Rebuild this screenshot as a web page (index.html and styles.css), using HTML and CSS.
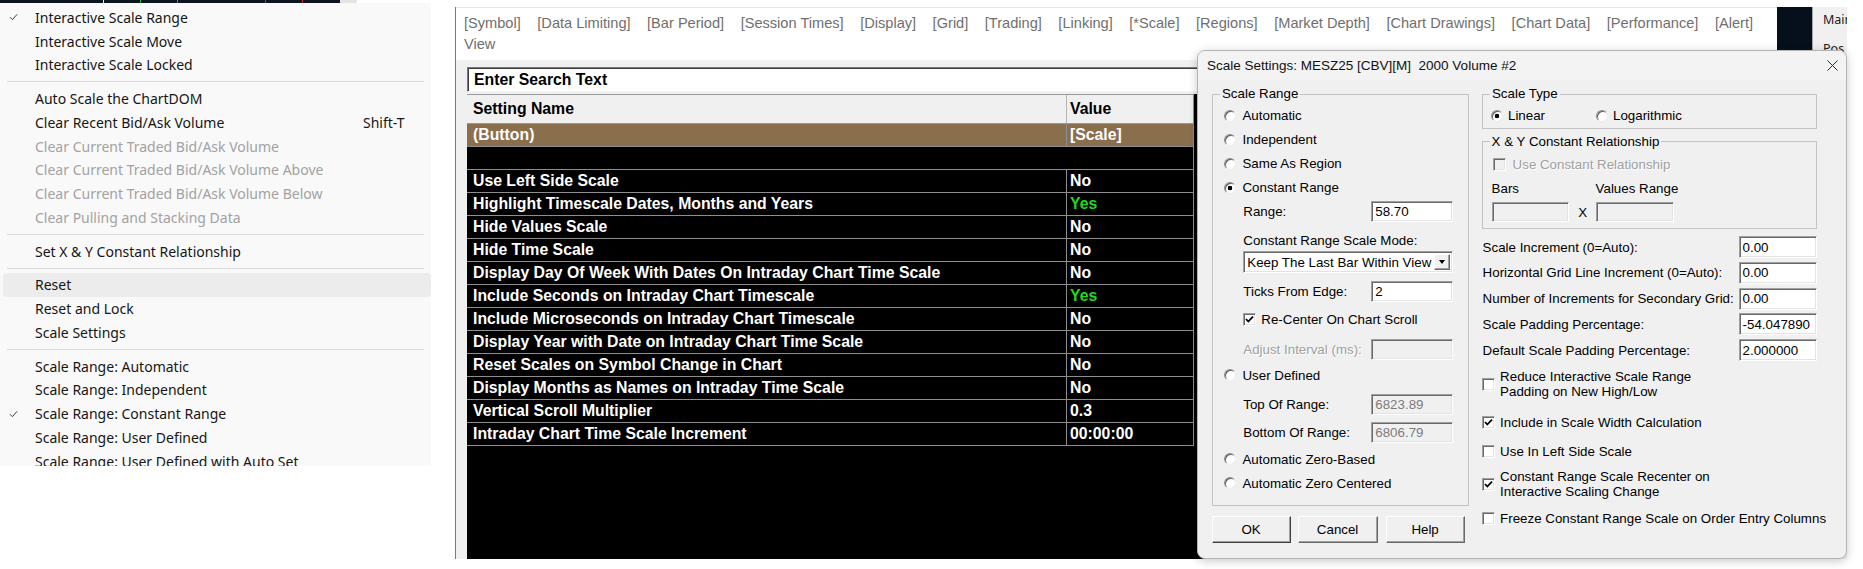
FILE: index.html
```html
<!DOCTYPE html>
<html lang="en">
<head>
<meta charset="utf-8">
<title>Scale Settings</title>
<link rel="stylesheet" href="styles.css">
</head>
<body>
<div class="screen">
  <div class="leftcol">
    <div class="chartstrip"></div>
    <div class="menu">
      <div class="mi"><span class="slot"><svg class="tick" viewBox="0 0 10 8" width="9" height="8"><polyline points="1,4.2 3.8,7 9,1"/></svg></span><span>Interactive Scale Range</span></div>
      <div class="mi"><span class="slot"></span><span>Interactive Scale Move</span></div>
      <div class="mi"><span class="slot"></span><span>Interactive Scale Locked</span></div>
      <div class="sep"></div>
      <div class="mi"><span class="slot"></span><span>Auto Scale the ChartDOM</span></div>
      <div class="mi"><span class="slot"></span><span>Clear Recent Bid/Ask Volume</span><span class="shortcut">Shift-T</span></div>
      <div class="mi dis"><span class="slot"></span><span>Clear Current Traded Bid/Ask Volume</span></div>
      <div class="mi dis"><span class="slot"></span><span>Clear Current Traded Bid/Ask Volume Above</span></div>
      <div class="mi dis"><span class="slot"></span><span>Clear Current Traded Bid/Ask Volume Below</span></div>
      <div class="mi dis"><span class="slot"></span><span>Clear Pulling and Stacking Data</span></div>
      <div class="sep"></div>
      <div class="mi"><span class="slot"></span><span>Set X &amp; Y Constant Relationship</span></div>
      <div class="sep"></div>
      <div class="mi hl"><span class="slot"></span><span>Reset</span></div>
      <div class="mi"><span class="slot"></span><span>Reset and Lock</span></div>
      <div class="mi"><span class="slot"></span><span>Scale Settings</span></div>
      <div class="sep"></div>
      <div class="mi"><span class="slot"></span><span>Scale Range: Automatic</span></div>
      <div class="mi"><span class="slot"></span><span>Scale Range: Independent</span></div>
      <div class="mi"><span class="slot"><svg class="tick" viewBox="0 0 10 8" width="9" height="8"><polyline points="1,4.2 3.8,7 9,1"/></svg></span><span>Scale Range: Constant Range</span></div>
      <div class="mi"><span class="slot"></span><span>Scale Range: User Defined</span></div>
      <div class="mi"><span class="slot"></span><span>Scale Range: User Defined with Auto Set</span></div>
    </div>
  </div>

  <div class="win">
    <div class="tabrow">
      <div class="tabs">
        <div class="tabline">
          <span>[Symbol]</span><span>[Data Limiting]</span><span>[Bar Period]</span><span>[Session Times]</span><span>[Display]</span><span>[Grid]</span><span>[Trading]</span><span>[Linking]</span><span>[*Scale]</span><span>[Regions]</span><span>[Market Depth]</span><span>[Chart Drawings]</span><span>[Chart Data]</span><span>[Performance]</span><span>[Alert]</span>
        </div>
        <div class="tabline"><span>View</span></div>
      </div>
      <div class="darkblock"></div>
      <div class="mainpanel"><div class="mp1">Main</div><div class="mp2">Pos</div></div>
    </div>
    <div class="panel">
      <div class="search">Enter Search Text</div>
      <div class="grid">
        <div class="row head"><div class="c1">Setting Name</div><div class="c2">Value</div></div>
        <div class="row brown"><div class="c1">(Button)</div><div class="c2">[Scale]</div></div>
        <div class="row blank"></div>
        <div class="row"><div class="c1">Use Left Side Scale</div><div class="c2">No</div></div>
        <div class="row"><div class="c1">Highlight Timescale Dates, Months and Years</div><div class="c2 yes">Yes</div></div>
        <div class="row"><div class="c1">Hide Values Scale</div><div class="c2">No</div></div>
        <div class="row"><div class="c1">Hide Time Scale</div><div class="c2">No</div></div>
        <div class="row"><div class="c1">Display Day Of Week With Dates On Intraday Chart Time Scale</div><div class="c2">No</div></div>
        <div class="row"><div class="c1">Include Seconds on Intraday Chart Timescale</div><div class="c2 yes">Yes</div></div>
        <div class="row"><div class="c1">Include Microseconds on Intraday Chart Timescale</div><div class="c2">No</div></div>
        <div class="row"><div class="c1">Display Year with Date on Intraday Chart Time Scale</div><div class="c2">No</div></div>
        <div class="row"><div class="c1">Reset Scales on Symbol Change in Chart</div><div class="c2">No</div></div>
        <div class="row"><div class="c1">Display Months as Names on Intraday Time Scale</div><div class="c2">No</div></div>
        <div class="row"><div class="c1">Vertical Scroll Multiplier</div><div class="c2">0.3</div></div>
        <div class="row"><div class="c1">Intraday Chart Time Scale Increment</div><div class="c2">00:00:00</div></div>
      </div>
    </div>
  </div>

  <div class="dialog">
    <div class="dtitle">
      <span>Scale Settings: MESZ25 [CBV][M]&nbsp; 2000 Volume #2</span>
      <svg class="close" viewBox="0 0 11 11" width="11" height="11"><path d="M0.5 0.5 L10.5 10.5 M10.5 0.5 L0.5 10.5"/></svg>
    </div>
    <div class="dbody">
      <div class="dcol">
        <fieldset class="fs fs-range">
          <legend>Scale Range</legend>
          <div class="rr first"><span class="radio"></span>Automatic</div>
          <div class="rr"><span class="radio"></span>Independent</div>
          <div class="rr"><span class="radio"></span>Same As Region</div>
          <div class="rr"><span class="radio on"></span>Constant Range</div>
          <div class="frow"><span>Range:</span><span class="tb">58.70</span></div>
          <div class="flabel">Constant Range Scale Mode:</div>
          <div class="select"><span class="seltext">Keep The Last Bar Within View</span><span class="arrow"><span class="tri"></span></span></div>
          <div class="frow f-ticks"><span>Ticks From Edge:</span><span class="tb">2</span></div>
          <div class="crow f-recenter"><span class="cb"><svg viewBox="0 0 11 11" width="11" height="11"><polyline points="2,5 4.3,7.5 9,2.6"/></svg></span>Re-Center On Chart Scroll</div>
          <div class="frow f-adjust"><span class="distext">Adjust Interval (ms):</span><span class="tb dis"></span></div>
          <div class="rr f-user"><span class="radio"></span>User Defined</div>
          <div class="frow f-top"><span>Top Of Range:</span><span class="tb dis">6823.89</span></div>
          <div class="frow f-bottom"><span>Bottom Of Range:</span><span class="tb dis">6806.79</span></div>
          <div class="rr f-zb"><span class="radio"></span>Automatic Zero-Based</div>
          <div class="rr"><span class="radio"></span>Automatic Zero Centered</div>
        </fieldset>
        <div class="btns"><span class="btn ok">OK</span><span class="btn cancel">Cancel</span><span class="btn help">Help</span></div>
      </div>
      <div class="dcol">
        <fieldset class="fs fs-type">
          <legend>Scale Type</legend>
          <div class="typerow">
            <span class="rr lin"><span class="radio on"></span>Linear</span>
            <span class="rr"><span class="radio"></span>Logarithmic</span>
          </div>
        </fieldset>
        <fieldset class="fs fs-xy">
          <legend>X &amp; Y Constant Relationship</legend>
          <div class="crow xy-use"><span class="cb dis"></span><span class="distext">Use Constant Relationship</span></div>
          <div class="xylabels"><span class="xl1">Bars</span><span>Values Range</span></div>
          <div class="xyinputs"><span class="tb dis xin1"></span><span class="xmark">X</span><span class="tb dis xin2"></span></div>
        </fieldset>
        <div class="lrow first"><span>Scale Increment (0=Auto):</span><span class="tb wide">0.00</span></div>
        <div class="lrow"><span>Horizontal Grid Line Increment (0=Auto):</span><span class="tb wide">0.00</span></div>
        <div class="lrow"><span>Number of Increments for Secondary Grid:</span><span class="tb wide">0.00</span></div>
        <div class="lrow"><span>Scale Padding Percentage:</span><span class="tb wide">-54.047890</span></div>
        <div class="lrow"><span>Default Scale Padding Percentage:</span><span class="tb wide">2.000000</span></div>
        <div class="crow two c-reduce"><span class="cb"></span><span>Reduce Interactive Scale Range<br>Padding on New High/Low</span></div>
        <div class="crow c-include"><span class="cb"><svg viewBox="0 0 11 11" width="11" height="11"><polyline points="2,5 4.3,7.5 9,2.6"/></svg></span><span>Include in Scale Width Calculation</span></div>
        <div class="crow c-left"><span class="cb"></span><span>Use In Left Side Scale</span></div>
        <div class="crow two c-recenter"><span class="cb"><svg viewBox="0 0 11 11" width="11" height="11"><polyline points="2,5 4.3,7.5 9,2.6"/></svg></span><span>Constant Range Scale Recenter on<br>Interactive Scaling Change</span></div>
        <div class="crow c-freeze"><span class="cb"></span><span>Freeze Constant Range Scale on Order Entry Columns</span></div>
      </div>
    </div>
  </div>
</div>
</body>
</html>
```

FILE: styles.css
```css
* { box-sizing: border-box; }

html, body {
  margin: 0;
  padding: 0;
  background: #ffffff;
}

body {
  width: 1863px;
  height: 569px;
  overflow: hidden;
  font-family: "Liberation Sans", Arial, sans-serif;
}

.screen {
  position: relative;
  display: flex;
  width: 1863px;
  height: 569px;
  background: #ffffff;
}

/* ---------- context menu ---------- */
.leftcol {
  width: 431px;
  flex: none;
  display: flex;
  flex-direction: column;
}

.chartstrip {
  height: 3px;
  background: linear-gradient(90deg,
    #0c1420 0 103px, #e8e8e8 103px 104px, #0c1420 104px 140px,
    #2fb52f 140px 141px, #0c1420 141px 177px, #2fb52f 177px 178px,
    #0c1420 178px 265px, #c83232 265px 266px, #0c1420 266px 302px,
    #c83232 302px 303px, #0c1420 303px 340px, #e4e4e4 340px 357px,
    transparent 357px);
}

.menu {
  height: 463px;
  overflow: hidden;
  background: #f9f9f9;
  padding-top: 2.5px;
  font-family: "Noto Sans", "Open Sans", sans-serif;
  font-size: 14px;
  color: #161616;
}

.mi {
  height: 23.75px;
  display: flex;
  align-items: center;
  white-space: nowrap;
}

.mi .slot {
  width: 35px;
  flex: none;
  display: flex;
  align-items: center;
  padding-left: 9px;
}

.tick polyline {
  fill: none;
  stroke: #3a3a3a;
  stroke-width: 1.1;
}

.mi.dis { color: #a2a2a2; }

.mi.hl {
  margin-left: 3px;
  background: #ececec;
  border-radius: 4px;
}
.mi.hl .slot { width: 32px; }

.shortcut {
  margin-left: auto;
  width: 68px;
}

.sep {
  height: 10px;
  display: flex;
  align-items: center;
  padding: 0 7px;
}
.sep::before {
  content: "";
  flex: 1;
  height: 1px;
  background: #dadada;
}

/* ---------- chart settings window ---------- */
.win {
  margin-left: 24px;
  margin-top: 7px;
  width: 1392px;
  height: 552px;
  flex: none;
  border-left: 1px solid #7a7a7a;
  display: flex;
  flex-direction: column;
}

.tabrow {
  height: 53px;
  flex: none;
  display: flex;
  background: #ffffff;
}

.tabs {
  flex: 1;
  padding: 4px 0 0 8px;
  font-size: 14.6px;
  color: #6f6f6f;
  border-top: 1px solid #e6e6e6;
}

.tabline {
  display: flex;
  gap: 16.5px;
  height: 21.4px;
  align-items: center;
  white-space: nowrap;
}

.darkblock {
  width: 35px;
  flex: none;
  background: #06101c;
}

.mainpanel {
  width: 35px;
  flex: none;
  overflow: hidden;
  background: #f0f0f0;
  border-left: 1px solid #a8a8a8;
  padding-left: 10px;
  font-family: "Noto Sans", sans-serif;
  font-size: 12.5px;
  color: #1a1a1a;
  white-space: nowrap;
  line-height: 16px;
}
.mp1 { margin-top: 5px; }
.mp2 { margin-top: 13px; }

.panel {
  flex: 1;
  background: #f0f0f0;
  padding: 7px 0 0 11px;
  display: flex;
  flex-direction: column;
  overflow: hidden;
}

.search {
  height: 25px;
  width: 760px;
  flex: none;
  background: #ffffff;
  border: 1px solid;
  border-color: #7a7a7a #f4f4f4 #f4f4f4 #7a7a7a;
  box-shadow: inset 1px 1px 0 #3c3c3c;
  padding-left: 6px;
  display: flex;
  align-items: center;
  font-weight: bold;
  font-size: 15.8px;
  color: #000;
}

.grid {
  margin-top: 2px;
  flex: 1;
  width: 780px;
  background: #000000;
  font-weight: bold;
  font-size: 15.8px;
  color: #ffffff;
}

.row {
  display: flex;
  width: 727px;
  height: 23px;
  border-bottom: 1px solid #8e8e8e;
  border-right: 1px solid #8e8e8e;
  white-space: nowrap;
}

.row .c1 {
  width: 600px;
  flex: none;
  padding-left: 6px;
  border-right: 1px solid #8e8e8e;
  display: flex;
  align-items: center;
}

.row .c2 {
  flex: 1;
  padding-left: 3px;
  display: flex;
  align-items: center;
}

.row .yes { color: #1fd81f; }

.row.head {
  height: 30px;
  background: #f0f0f0;
  color: #000;
  border-top: 1px solid #9a9a9a;
  border-bottom-color: #9a9a9a;
}
.row.head .c1 { border-right-color: #b4b4b4; }

.row.brown {
  background: #8a6f4d;
  color: #fbfbfb;
}

/* ---------- dialog ---------- */
.dialog {
  position: absolute;
  left: 1197px;
  top: 50px;
  width: 650px;
  height: 509px;
  background: #f0f0f0;
  border: 1px solid #b4b4b4;
  border-radius: 8px;
  box-shadow: 0 2px 10px rgba(0, 0, 0, 0.22);
  overflow: hidden;
  font-size: 13.33px;
  color: #000;
  display: flex;
  flex-direction: column;
}

.dtitle {
  height: 29px;
  flex: none;
  background: #f3f3f3;
  display: flex;
  align-items: center;
  padding: 0 8.5px 0 9px;
  font-size: 13.5px;
  color: #111;
  white-space: nowrap;
}

.close {
  margin-left: auto;
}
.close path {
  stroke: #2a2a2a;
  stroke-width: 1;
  fill: none;
}

.dbody {
  display: grid;
  grid-template-columns: 257px 335px;
  column-gap: 13px;
  padding: 6px 0 0 13.6px;
}

.dcol {
  display: flex;
  flex-direction: column;
}

.fs {
  margin: 0;
  min-width: 0;
  border: 1px solid #c3c3c3;
}

.fs legend {
  padding: 0 2px;
  line-height: 16px;
  font-size: 13.33px;
}

.fs-range {
  padding: 1.5px 14.3px 10px 11.4px;
}
.fs-range legend { margin-left: -4px; }

.fs-type {
  padding: 1.5px 8px 0 8.4px;
}
.fs-type legend { margin-left: -1px; }

.fs-xy {
  margin-top: 5px;
  padding: 4px 8px 6px 9px;
}
.fs-xy legend { margin-left: -2px; }

/* radio */
.rr {
  display: flex;
  align-items: center;
  gap: 6.5px;
  height: 24px;
  white-space: nowrap;
}

.radio {
  width: 12px;
  height: 12px;
  flex: none;
  border-radius: 50%;
  border: 1px solid;
  border-color: #8c8c8c #ececec #ececec #8c8c8c;
  background: #ffffff;
  box-shadow: inset 1px 1px 0 #5e5e5e;
}
.radio.on {
  background: radial-gradient(circle at 50% 50%, #000 0 2px, #ffffff 2.6px);
}

/* checkbox */
.crow {
  display: flex;
  align-items: center;
  gap: 6px;
  white-space: nowrap;
}

.cb {
  width: 13px;
  height: 13px;
  flex: none;
  background: #ffffff;
  border: 1px solid;
  border-color: #a0a0a0 #ffffff #ffffff #a0a0a0;
  box-shadow: inset 1px 1px 0 #696969, inset -1px -1px 0 #e3e3e3;
  display: flex;
  align-items: center;
  justify-content: center;
}
.cb svg polyline {
  fill: none;
  stroke: #000;
  stroke-width: 1.8;
}
.cb.dis { background: #f0f0f0; }

.distext {
  color: #a0a0a0;
  text-shadow: 1px 1px 0 #ffffff;
}

/* form rows */
.frow {
  height: 24px;
  padding-left: 19.3px;
  display: flex;
  align-items: center;
  justify-content: space-between;
  white-space: nowrap;
}

.tb {
  width: 82px;
  height: 21px;
  flex: none;
  background: #ffffff;
  border: 1px solid;
  border-color: #a0a0a0 #ffffff #ffffff #a0a0a0;
  box-shadow: inset 1px 1px 0 #696969, inset -1px -1px 0 #e3e3e3;
  padding-left: 3px;
  display: flex;
  align-items: center;
  white-space: nowrap;
}
.tb.dis {
  background: #f0f0f0;
  color: #7c7c7c;
}

.flabel {
  height: 16px;
  margin-top: 9.5px;
  padding-left: 19.3px;
  line-height: 16px;
  white-space: nowrap;
}

.select {
  margin-top: 2px;
  margin-left: 19.3px;
  height: 22px;
  background: #ffffff;
  border: 1px solid;
  border-color: #a0a0a0 #ffffff #ffffff #a0a0a0;
  box-shadow: inset 1px 1px 0 #696969, inset -1px -1px 0 #e3e3e3;
  padding: 2px 2px 2px 3px;
  display: flex;
  align-items: center;
}
.seltext { flex: 1; white-space: nowrap; }

.arrow {
  width: 16px;
  height: 100%;
  background: #f0f0f0;
  border: 1px solid;
  border-color: #ffffff #696969 #696969 #ffffff;
  box-shadow: inset -1px -1px 0 #a0a0a0;
  display: flex;
  align-items: center;
  justify-content: center;
}
.tri {
  width: 0;
  height: 0;
  border-left: 3.5px solid transparent;
  border-right: 3.5px solid transparent;
  border-top: 4px solid #000;
}

.f-ticks { margin-top: 6px; }
.f-recenter { height: 32px; padding-left: 19.3px; gap: 5px; }
.f-adjust { margin-top: 2px; }
.f-user { margin-top: 2px; }
.f-top { margin-top: 5px; }
.f-bottom { margin-top: 4px; }
.f-zb { margin-top: 3px; }

/* buttons */
.btns {
  margin-top: 10px;
  display: flex;
}
.btn {
  height: 27px;
  display: flex;
  align-items: center;
  justify-content: center;
  background: #f0f0f0;
  border: 1px solid;
  border-color: #ffffff #696969 #696969 #ffffff;
  box-shadow: inset -1px -1px 0 #a0a0a0;
}
.btn.ok { width: 79px; border-color: #ffffff #404040 #404040 #ffffff; }
.btn.cancel { width: 80px; margin-left: 7px; }
.btn.help { width: 79px; margin-left: 8px; }

/* right column */
.typerow {
  display: flex;
  height: 24px;
}
.typerow .rr { gap: 5px; }
.typerow .lin { width: 105px; }

.xy-use {
  height: 22px;
  padding-left: 1px;
  gap: 7px;
}

.xylabels {
  margin-top: 5px;
  height: 16px;
  display: flex;
  align-items: center;
  white-space: nowrap;
}
.xl1 { width: 104px; }

.xyinputs {
  margin-top: 5.5px;
  height: 20px;
  display: flex;
  align-items: center;
}
.xin1 { width: 77.5px; height: 20px; }
.xin2 { width: 78px; height: 20px; }
.xmark {
  width: 27px;
  text-align: center;
}

.lrow {
  height: 22px;
  margin-top: 3.75px;
  display: flex;
  align-items: center;
  justify-content: space-between;
  white-space: nowrap;
  padding-left: 1px;
}
.lrow.first { margin-top: 7px; }
.tb.wide { width: 78px; height: 22px; }

.crow.two {
  height: 32px;
  line-height: 15.5px;
}
.c-reduce, .c-include, .c-left, .c-recenter, .c-freeze { padding-left: 0.5px; gap: 5px; }
.c-reduce { margin-top: 7px; }
.c-include { margin-top: 14px; height: 17px; }
.c-left { margin-top: 11px; height: 18px; }
.c-recenter { margin-top: 8px; }
.c-freeze { margin-top: 9px; height: 18px; }
```
